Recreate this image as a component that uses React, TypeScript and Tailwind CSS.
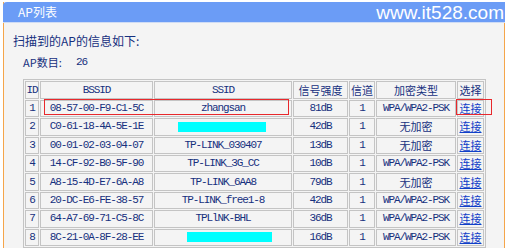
import React from 'react';

const rows = [
  { id: 1, mac: '08-57-00-F9-C1-5C', ssid: 'zhangsan', sig: '81dB', ch: '1', enc: 'WPA/WPA2-PSK' },
  { id: 2, mac: 'C0-61-18-4A-5E-1E', ssid: '', bar: 'w-[88px] ml-[23px]', sig: '42dB', ch: '1', enc: '无加密' },
  { id: 3, mac: '00-01-02-03-04-07', ssid: 'TP-LINK_030407', sig: '13dB', ch: '1', enc: '无加密' },
  { id: 4, mac: '14-CF-92-B0-5F-90', ssid: 'TP-LINK_3G_CC', sig: '10dB', ch: '1', enc: 'WPA/WPA2-PSK' },
  { id: 5, mac: 'A8-15-4D-E7-6A-A8', ssid: 'TP-LINK_6AA8', sig: '79dB', ch: '1', enc: '无加密' },
  { id: 6, mac: '20-DC-E6-FE-38-57', ssid: 'TP-LINK_free1-8', sig: '42dB', ch: '1', enc: 'WPA/WPA2-PSK' },
  { id: 7, mac: '64-A7-69-71-C5-8C', ssid: 'TPLlNK-BHL', sig: '36dB', ch: '1', enc: 'WPA/WPA2-PSK' },
  { id: 8, mac: '8C-21-0A-8F-28-EE', ssid: '', bar: 'w-[85px] ml-[32px]', sig: '16dB', ch: '1', enc: 'WPA/WPA2-PSK' },
];

const mono = "font-['Liberation_Mono',monospace] text-[11px] tracking-[-1.1px]";
const cjk = "font-['Noto_Sans_CJK_SC',sans-serif] text-[11px]";
const cell = 'border border-[#c4c4c4] p-0 h-[17.4px] text-center align-middle leading-none';

export default function App() {
  return (
    <div className="w-[510px] h-[248px] overflow-hidden bg-white pt-[2px] pl-[3px] pr-[5px]">
      <div className="h-full bg-[#f4f4f4] border-l border-r border-[#f5a54a] flex flex-col">
        <div className="h-[22px] -mx-px bg-[#6b9cf6] rounded-tl-[4px] border-b border-[#cfdcf5] flex items-center justify-between pl-[15px]">
          <span className="font-['Noto_Sans_CJK_SC',sans-serif] text-[12px] text-white">AP列表</span>
          <span className="font-['Liberation_Sans',sans-serif] text-[19px] text-white leading-none mt-[1px] mr-[1px]">www.it528.com</span>
        </div>
        <div className="pl-[9px] pt-[9px] text-[#16307e] font-['Noto_Sans_CJK_SC',sans-serif] text-[12px] leading-[18px]">扫描到的AP的信息如下:</div>
        <div className="pl-[19px] pt-[3px] flex text-[#16307e] text-[11px] leading-[18px]">
          <span className="font-['Noto_Sans_CJK_SC',sans-serif] w-[53px]">AP数目:</span>
          <span className={mono}>26</span>
        </div>
        <div className="relative ml-[19px] mt-[8px]">
          <table className="w-[461px] table-fixed border-separate border-spacing-[1px] border border-[#c4c4c4] text-[#16307e]">
            <thead>
              <tr>
                <th className={`${cell} w-[14px] font-normal ${mono}`}>ID</th>
                <th className={`${cell} w-[113px] font-normal ${mono}`}>BSSID</th>
                <th className={`${cell} w-[138px] font-normal ${mono}`}>SSID</th>
                <th className={`${cell} w-[55px] font-normal ${cjk}`}>信号强度</th>
                <th className={`${cell} w-[26px] font-normal ${cjk}`}>信道</th>
                <th className={`${cell} w-[80px] font-normal ${cjk}`}>加密类型</th>
                <th className={`${cell} w-[27px] font-normal ${cjk}`}>选择</th>
              </tr>
            </thead>
            <tbody>
              {rows.map((r) => (
                <tr key={r.id}>
                  <td className={`${cell} ${mono}`}>{r.id}</td>
                  <td className={`${cell} ${mono}`}>{r.mac}</td>
                  <td className={`${cell} ${mono}`}>
                    {r.bar ? <div className={`${r.bar} h-[10px] bg-[#00ffff]`} /> : r.ssid}
                  </td>
                  <td className={`${cell} ${mono}`}>{r.sig}</td>
                  <td className={`${cell} ${mono}`}>{r.ch}</td>
                  <td className={`${cell} ${r.enc === '无加密' ? cjk : mono}`}>{r.enc}</td>
                  <td className={`${cell} ${cjk}`}>
                    <a className="text-[#1040c8] underline">连接</a>
                  </td>
                </tr>
              ))}
            </tbody>
          </table>
          <div className="absolute left-[21px] top-[20px] w-[245px] h-[16px] border border-[#e8282c]" />
          <div className="absolute left-[433px] top-[20px] w-[36px] h-[16px] border border-[#e8282c]" />
        </div>
      </div>
    </div>
  );
}
